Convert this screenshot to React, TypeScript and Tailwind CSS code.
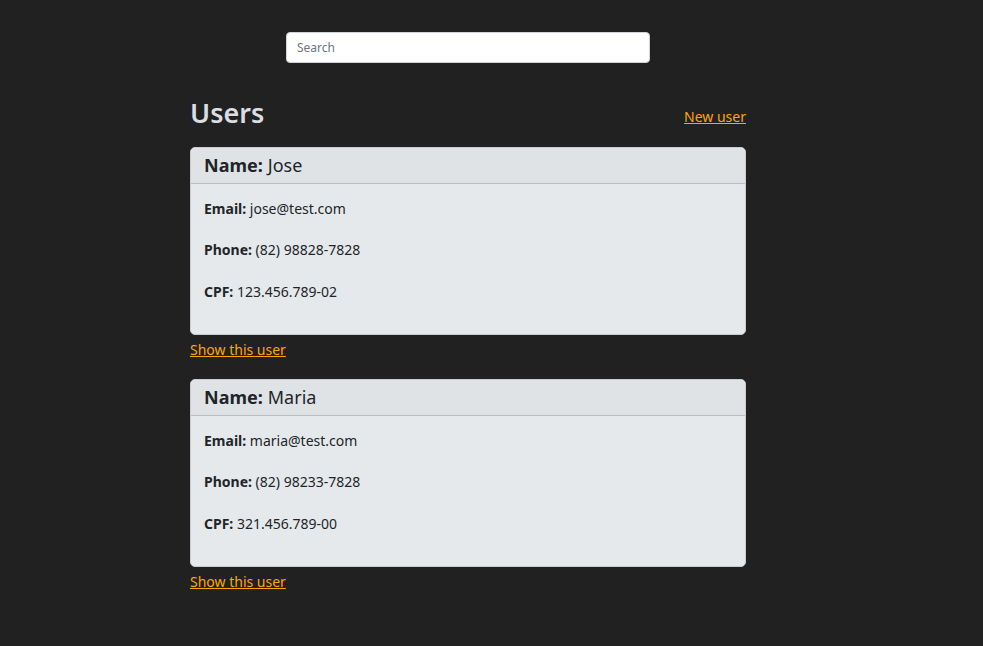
const users = [
  { name: 'Jose', email: 'jose@test.com', phone: '(82) 98828-7828', cpf: '123.456.789-02' },
  { name: 'Maria', email: 'maria@test.com', phone: '(82) 98233-7828', cpf: '321.456.789-00' },
];

function UserCard({ user }: { user: (typeof users)[number] }) {
  return (
    <div className="mb-[18px]">
      <div className="rounded-[5px] border border-[#c9ccd0] bg-[#e6e9ec] text-[#212529]">
        <div className="flex h-[36px] items-center border-b border-[#b9bcc0] bg-[#e0e3e6] px-[13px] text-[18px] rounded-t-[5px]">
          <span className="font-bold">Name:</span>
          <span className="ml-[5px]">{user.name}</span>
        </div>
        <div className="px-[13px] pt-[14px] pb-[12px] text-[14px] leading-[22px]">
          <p className="mb-[19px]">
            <strong>Email:</strong> {user.email}
          </p>
          <p className="mb-[20px]">
            <strong>Phone:</strong> {user.phone}
          </p>
          <p className="mb-[19px]">
            <strong>CPF:</strong> {user.cpf}
          </p>
        </div>
      </div>
      <a href="#" className="mt-[4px] block w-fit text-[14px] leading-[22px] text-[#ffa500] underline">
        Show this user
      </a>
    </div>
  );
}

export default function App() {
  return (
    <div
      className="min-h-[646px] bg-[#212121] pt-[32px]"
      style={{ fontFamily: '"Noto Sans", "Open Sans", sans-serif' }}
    >
      <div className="ml-[190px] w-[556px]">
        <div className="flex justify-center">
          <input
            placeholder="Search"
            className="h-[31px] w-[364px] rounded-[4px] border border-[#ced4da] bg-white px-[10px] text-[12px] text-[#212529] placeholder:text-[#6c757d] outline-none"
          />
        </div>
        <div className="mt-[33px] flex items-end justify-between">
          <h1 className="text-[27px] font-semibold leading-[34px] text-[#dadde1]">Users</h1>
          <a href="#" className="mb-[2px] text-[14px] leading-[22px] text-[#ffa500] underline">
            New user
          </a>
        </div>
        <div className="mt-[17px]">
          {users.map((u) => (
            <UserCard key={u.name} user={u} />
          ))}
        </div>
      </div>
    </div>
  );
}
